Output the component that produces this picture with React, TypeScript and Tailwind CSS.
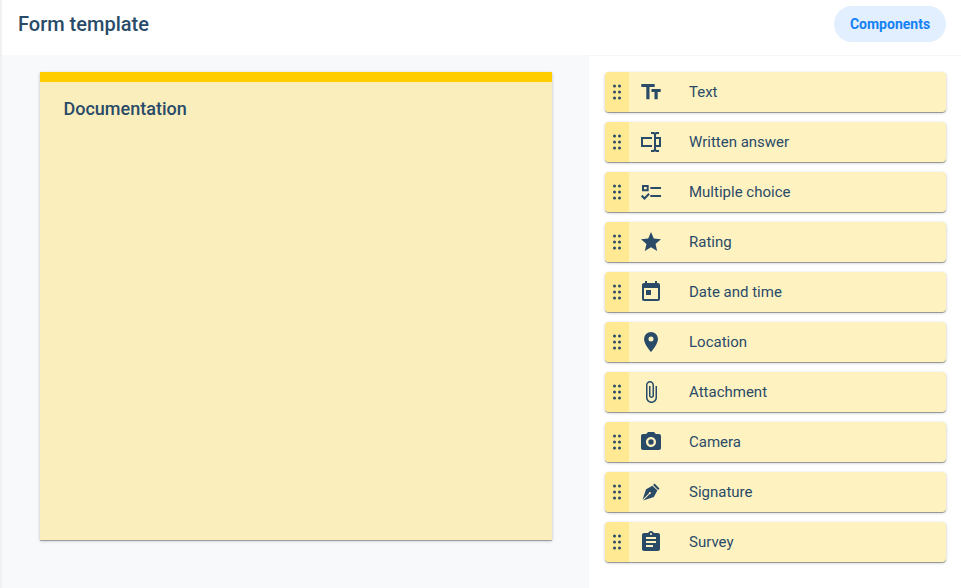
import React from "react";

const components: { label: string; path: string }[] = [
  { label: "Text", path: "M2.3 4v3h5v12.2h3.2V7h5.2V4H2.3zm19.4 5h-9.2v3h3v7.2h3.2V12h3V9z" },
  {
    label: "Written answer",
    path: "M17,7H22V17H17V19A1,1 0 0,0 18,20H20V22H17.5C16.95,22 16,21.55 16,21C16,21.55 15.05,22 14.5,22H12V20H14A1,1 0 0,0 15,19V5A1,1 0 0,0 14,4H12V2H14.5C15.05,2 16,2.45 16,3C16,2.45 16.95,2 17.5,2H20V4H18A1,1 0 0,0 17,5V7M2,7H13V9H4V15H13V17H2V7M20,15V9H17V15H20Z",
  },
  {
    label: "Multiple choice",
    path: "M3,5H9.7V11.2H3V5M5,7V9.2H7.7V7H5M11.3,7H22V9H11.3V7M11.3,15H22V17H11.3V15M5.5,19.9L2,16.4L3.4,14.8L5.5,16.9L9.4,13L10.8,14.6L5.5,19.9Z",
  },
  {
    label: "Rating",
    path: "M12,17.27L18.18,21L16.54,13.97L22,9.24L14.81,8.62L12,2L9.19,8.62L2,9.24L7.45,13.97L5.82,21L12,17.27Z",
  },
  {
    label: "Date and time",
    path: "M7,10H12V15H7M19,19H5V8H19M19,3H18V1H16V3H8V1H6V3H5C3.89,3 3,3.9 3,5V19A2,2 0 0,0 5,21H19A2,2 0 0,0 21,19V5A2,2 0 0,0 19,3Z",
  },
  {
    label: "Location",
    path: "M12,11.5A2.5,2.5 0 0,1 9.5,9A2.5,2.5 0 0,1 12,6.5A2.5,2.5 0 0,1 14.5,9A2.5,2.5 0 0,1 12,11.5M12,2A7,7 0 0,0 5,9C5,14.25 12,22 12,22C12,22 19,14.25 19,9A7,7 0 0,0 12,2Z",
  },
  {
    label: "Attachment",
    path: "M16.5 6v11.5c0 2.21-1.79 4-4 4s-4-1.79-4-4V5c0-1.38 1.12-2.5 2.5-2.5s2.5 1.12 2.5 2.5v10.5c0 .55-.45 1-1 1s-1-.45-1-1V6H10v9.5c0 1.38 1.12 2.5 2.5 2.5s2.5-1.12 2.5-2.5V5c0-2.21-1.79-4-4-4S7 2.79 7 5v12.5c0 3.04 2.46 5.5 5.5 5.5s5.5-2.46 5.5-5.5V6h-1.5z",
  },
  {
    label: "Camera",
    path: "M9.3 12a2.7 2.7 0 1 0 5.4 0a2.7 2.7 0 1 0 -5.4 0M9 2L7.17 4H4c-1.1 0-2 .9-2 2v12c0 1.1.9 2 2 2h16c1.1 0 2-.9 2-2V6c0-1.1-.9-2-2-2h-3.17L15 2H9zm3 15c-2.76 0-5-2.24-5-5s2.24-5 5-5 5 2.24 5 5-2.24 5-5 5z",
  },
  {
    label: "Signature",
    path: "M15.54,3.5L20.5,8.47L19.07,9.88L14.12,4.93L15.54,3.5M3.5,19.78L10,13.31C9.9,13 9.97,12.61 10.23,12.35C10.62,11.96 11.26,11.96 11.65,12.35C12.04,12.75 12.04,13.38 11.65,13.77C11.39,14.03 11,14.1 10.69,14L4.22,20.5L14.83,16.95L18.36,10.59L13.42,5.64L7.05,9.17L3.5,19.78Z",
  },
  {
    label: "Survey",
    path: "M19 3h-4.18C14.4 1.84 13.3 1 12 1c-1.3 0-2.4.84-2.82 2H5c-1.1 0-2 .9-2 2v14c0 1.1.9 2 2 2h14c1.1 0 2-.9 2-2V5c0-1.1-.9-2-2-2zm-7 0c.55 0 1 .45 1 1s-.45 1-1 1-1-.45-1-1 .45-1 1-1zm2 14H7v-2h7v2zm3-4H7v-2h10v2zm0-4H7V7h10v2z",
  },
];

function DragHandle() {
  return (
    <div className="flex w-6 shrink-0 items-center justify-center bg-[#ffe992]">
      <svg width="24" height="24" viewBox="0 0 24 24" fill="currentColor">
        {[6, 12, 18].map((y) => (
          <React.Fragment key={y}>
            <circle cx="9.5" cy={y} r="1.5" />
            <circle cx="14.5" cy={y} r="1.5" />
          </React.Fragment>
        ))}
      </svg>
    </div>
  );
}

function ComponentRow({ label, path }: { label: string; path: string }) {
  return (
    <li className="flex h-10 overflow-hidden rounded bg-[#fff2c1] shadow-[0_1px_0_rgba(0,0,0,0.28),0_1px_3px_rgba(0,0,0,0.26)]">
      <DragHandle />
      <div className="flex items-center pl-[10px]">
        <svg width="24" height="24" viewBox="0 0 24 24" fill="currentColor">
          <path d={path} />
        </svg>
        <span className="ml-[26px] text-[15px] leading-6">{label}</span>
      </div>
    </li>
  );
}

export default function App() {
  return (
    <div className="flex h-[588px] w-[961px] flex-col overflow-hidden border-l-2 border-[#f0f1f3] bg-white font-[Roboto,sans-serif] text-[#294b68]">
      <header className="flex h-[55px] shrink-0 items-start justify-between pl-4 pr-[15px]">
        <h1 className="mt-[10px] text-xl leading-7 font-medium">Form template</h1>
        <button className="mt-1.5 h-9 w-28 rounded-full bg-[#e1effe] text-sm font-bold text-[#1581f3]">
          Components
        </button>
      </header>
      <div className="flex min-h-0 flex-1">
        <main className="w-[587px] shrink-0 bg-[#f7f9fb] pt-[17px] pl-[38px]">
          <section className="h-[468px] w-[512px] border-t-10 border-[#ffcd00] bg-[#faeebd] pt-[15px] pl-[23.5px] shadow-[0_1px_0_rgba(0,0,0,0.26),0_1px_3px_rgba(0,0,0,0.24)]">
            <h2 className="text-lg leading-6 font-medium">Documentation</h2>
          </section>
        </main>
        <aside className="flex-1 border-t border-[#f5f5f6] pt-4 pr-[15px] pl-4">
          <ul className="flex flex-col gap-[10px]">
            {components.map((item) => (
              <ComponentRow key={item.label} {...item} />
            ))}
          </ul>
        </aside>
      </div>
    </div>
  );
}
